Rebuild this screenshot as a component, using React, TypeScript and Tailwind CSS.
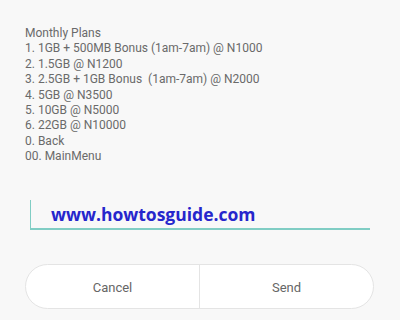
export default function App() {
  const lines = [
    "Monthly Plans",
    "1. 1GB + 500MB Bonus (1am-7am) @ N1000",
    "2. 1.5GB @ N1200",
    "3. 2.5GB + 1GB Bonus  (1am-7am) @ N2000",
    "4. 5GB @ N3500",
    "5. 10GB @ N5000",
    "6. 22GB @ N10000",
    "0. Back",
    "00. MainMenu",
  ]

  return (
    <div className="w-[400px] h-[320px] bg-[#f8f8f8] font-['Roboto',sans-serif] overflow-hidden">
      <div className="pt-[26px] pl-[25px] text-[12px] leading-[15.4px] text-[#6a6a6a] whitespace-pre">
        {lines.map((l) => (
          <div key={l}>{l}</div>
        ))}
      </div>

      <div className="mt-[35px] ml-[30px] w-[340px] h-[30px] border-b-2 border-[#80cdc4] flex items-center">
        <div className="w-px self-stretch bg-[#80cdc4]" />
        <span className="ml-[20px] text-[17.5px] font-bold text-[#2626cc] font-['Open_Sans',sans-serif]">
          www.howtosguide.com
        </span>
      </div>

      <div className="mt-[34px] ml-[25px] w-[349px] h-[45px] rounded-full border border-[#e4e4e4] bg-white flex text-[13px] text-[#666]">
        <div className="flex-1 flex items-center justify-center pt-[3px] border-r border-[#e4e4e4]">Cancel</div>
        <div className="flex-1 flex items-center justify-center pt-[3px]">Send</div>
      </div>
    </div>
  )
}
